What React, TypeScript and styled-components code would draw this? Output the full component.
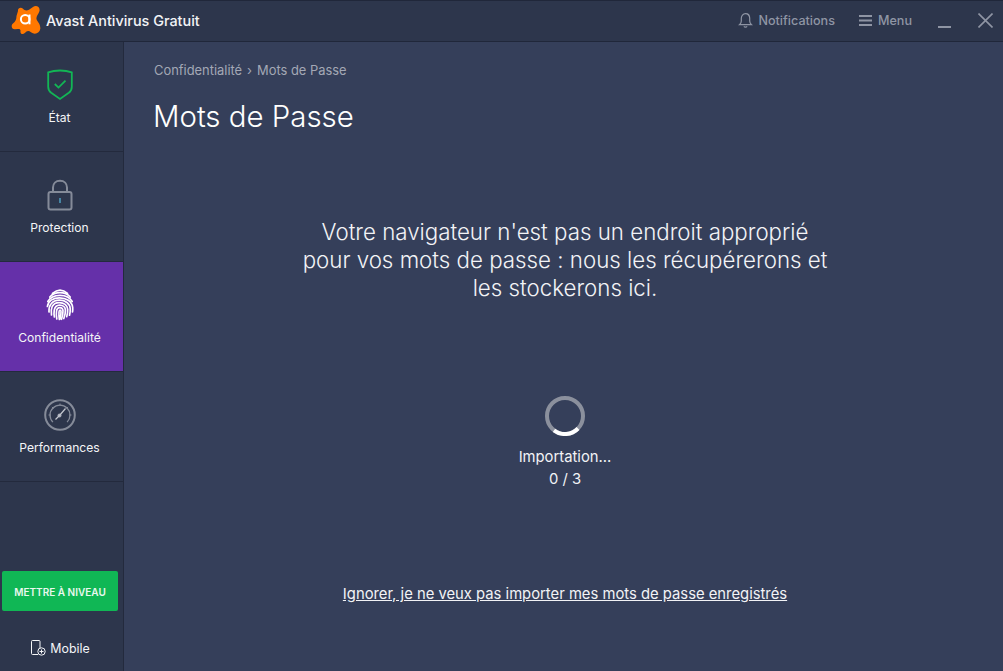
import React from "react";
import styled, { createGlobalStyle } from "styled-components";

const Global = createGlobalStyle`
  html, body { margin: 0; padding: 0; height: 100%; background: #353f5a; }
  #root { height: 100%; }
  * { box-sizing: border-box; }
`;

const Window = styled.div`
  width: 1003px;
  height: 671px;
  display: flex;
  flex-direction: column;
  overflow: hidden;
  font-family: Inter, "Liberation Sans", sans-serif;
  color: #fff;
  background: #353f5a;
`;

const TitleBar = styled.header`
  height: 42px;
  flex: none;
  display: flex;
  align-items: center;
  background: #2d364c;
  border-top: 1px solid #20273a;
  border-bottom: 1px solid #20273a;
  padding: 0 10px 2px 11px;
`;

const Brand = styled.div`
  display: flex;
  align-items: center;
  gap: 5px;
  font-size: 14.4px;
  font-weight: 500;
  color: #f2f3f6;
  flex: 1;
`;

const TopAction = styled.div<{ $gap: number; $offset?: number }>`
  display: flex;
  align-items: center;
  gap: ${(p) => p.$gap}px;
  margin-left: ${(p) => p.$offset ?? 0}px;
  font-size: 12.6px;
  font-weight: 500;
  color: #8f95a4;
`;

const TopActions = styled.div`
  display: flex;
  align-items: center;
`;

const WindowButtons = styled.div`
  display: flex;
  align-items: center;
  gap: 26px;
  margin-left: 26px;
`;

const Body = styled.div`
  flex: 1;
  display: flex;
  min-height: 0;
`;

const Sidebar = styled.nav`
  width: 124px;
  flex: none;
  display: flex;
  flex-direction: column;
  background: #2d364c;
  border-right: 1px solid #232a3d;
`;

const NavItem = styled.div<{ $active?: boolean }>`
  height: 110px;
  flex: none;
  display: flex;
  flex-direction: column;
  align-items: center;
  justify-content: flex-start;
  padding: 26px 4px 0 0;
  gap: 8px;
  font-size: 12.1px;
  color: #f4f5f7;
  background: ${(p) => (p.$active ? "#6530a9" : "transparent")};
  border-bottom: 1px solid #232a3d;
`;

const NavIcon = styled.div`
  height: 34px;
  display: flex;
  align-items: center;
  justify-content: center;
`;

const SideFooter = styled.div`
  margin-top: auto;
  display: flex;
  flex-direction: column;
  align-items: center;
  padding: 0 5px 15px 2px;
  gap: 29px;
`;

const Upgrade = styled.button`
  width: 116px;
  height: 40px;
  border: none;
  border-radius: 2px;
  background: #10b755;
  color: #e9f8ef;
  font-family: inherit;
  font-size: 10px;
  font-weight: 600;
  padding: 1px 0 0;
`;

const MobileLink = styled.div`
  display: flex;
  align-items: center;
  gap: 4px;
  font-size: 12.4px;
  color: #f4f5f7;
`;

const Main = styled.main`
  flex: 1;
  display: flex;
  flex-direction: column;
  padding: 21px 27px 0 30px;
`;

const Breadcrumb = styled.div`
  display: flex;
  gap: 5px;
  font-size: 12.9px;
  line-height: 16px;
  color: #a3a8b5;
`;

const Title = styled.h1`
  margin: 19px 0 0 -1px;
  font-size: 29.4px;
  line-height: 38px;
  font-weight: 300;
  color: #fff;
`;

const Message = styled.p`
  margin: 82px auto 0;
  width: 600px;
  text-align: center;
  font-size: 22.3px;
  line-height: 28px;
  font-weight: 300;
  color: #f2f3f6;
`;

const Progress = styled.div`
  margin-top: 94px;
  display: flex;
  flex-direction: column;
  align-items: center;
  font-size: 14.8px;
  line-height: 22px;
  color: #f2f3f6;
`;

const Spinner = styled.svg`
  display: block;
  margin-bottom: 10px;
`;

const SkipLink = styled.a`
  margin-top: 94px;
  align-self: center;
  font-size: 14.8px;
  line-height: 20px;
  color: #f2f3f6;
  text-decoration: underline;
`;

const Logo = () => (
  <svg width="30" height="30" viewBox="0 0 30 30">
    <path
      fill="#ff7800"
      d="M7 6C6.500 3 10 1.800 12 3.800C13.500 5.500 15.500 6 18 4.800L22 2C25.500 -.5 29.800 2.500 28.300 6.500C27.200 9.500 25 11.500 25.500 14C26 16.500 29.800 19 29.300 23.800C28.800 28.500 23.500 30 20 27.300C18.500 26 17 25.500 15.500 26.500L13.800 28C11.500 30 9 28.500 9.500 26C9.700 24.500 8.500 23.800 7 24L4 24.200C.8 24.400 -.5 20.500 2 18.500C4.500 16.500 5.500 14 5.500 11z"
    />
    <circle cx="14.200" cy="14.300" r="4.300" fill="none" stroke="#fff" strokeWidth="2" />
    <path d="M18.500 9.500V19.300" fill="none" stroke="#fff" strokeWidth="2" />
  </svg>
);

const BellIcon = () => (
  <svg width="15" height="16" viewBox="0 0 15 16" fill="none" stroke="#8f95a4" strokeWidth="1.200">
    <path d="M1.500 12.700c1.200-1 1.800-2 1.800-3.700V6.300C3.300 3.700 5 1.700 7.500 1.700s4.200 2 4.200 4.600V9c0 1.700.6 2.700 1.800 3.700z" />
    <path d="M5.900 14.300c.4.600 1 .9 1.600.9s1.200-.3 1.600-.9" />
  </svg>
);

const MenuIcon = () => (
  <svg width="13" height="11" viewBox="0 0 13 11" fill="none" stroke="#8f95a4" strokeWidth="1.800">
    <path d="M0 1h13M0 5.500h13M0 10h13" />
  </svg>
);

const MinimizeIcon = () => (
  <svg width="14" height="16" viewBox="0 0 14 16" fill="none" stroke="#8f95a4" strokeWidth="2">
    <path d="M0 15h13" />
  </svg>
);

const CloseIcon = () => (
  <svg width="15" height="15" viewBox="0 0 15 15" fill="none" stroke="#8f95a4" strokeWidth="1.600">
    <path d="M.5.500l14 14M14.500.500l-14 14" />
  </svg>
);

const ShieldIcon = () => (
  <svg width="26" height="32" viewBox="0 0 26 32" fill="none">
    <path
      d="M1.200 3.400C4.500 2.200 8.500 1.500 13 1.500s8.500.7 11.800 1.900v14.300c0 2.700-1 4.600-3 6.100L13 30l-8.800-6.200c-2-1.500-3-3.400-3-6.100z"
      stroke="#12b655"
      strokeWidth="1.800"
    />
    <path d="M7.800 15l3.700 3.600 7-7" stroke="#12b655" strokeWidth="1.800" />
  </svg>
);

const LockIcon = () => (
  <svg width="26" height="32" viewBox="0 0 26 32" fill="none" stroke="#858b99" strokeWidth="2">
    <rect x="1.500" y="13" width="23" height="17.500" rx="2" />
    <path d="M6 13V8.500C6 4.500 8.800 1.700 13 1.700s7 2.800 7 6.800V13" />
    <path d="M13 19v5" stroke="#4f9fc0" strokeWidth="1.500" />
  </svg>
);

const FingerprintIcon = () => (
  <svg width="28" height="32" viewBox="0 0 28 32" fill="none" stroke="#fff" strokeWidth="1.700" strokeLinecap="round">
    <path d="M6.500 4.500C9 2.400 11.500 1.200 14 1.200s5 1 7.500 3.300" />
    <path d="M3.800 8C6.500 5 10 3.700 14 3.700S21.500 5 24.200 8" />
    <path d="M1.800 12.500C4 8.500 8.500 6.300 14 6.300s10 2.200 12.200 6.200" />
    <path d="M1.400 17.500C2 12 7 8.800 13.500 8.800c6.500 0 12.500 3.500 13.200 9.700.1 1.500 0 3-.2 4.300" />
    <path d="M3 23C2.800 20 3.300 17 5 15c2-2.500 5-3.800 8.500-3.800 5.700 0 10.500 3.300 10.700 8.500.1 2.300-.1 4.500-.7 6.500" />
    <path d="M5.500 26c-.5-3-.5-6 .7-8.500 1.400-2.700 4-3.900 7-3.900 4.600 0 8.300 2.700 8.500 6.700.1 2.500-.2 5-1 7.400" />
    <path d="M8.400 28c-.4-2-.5-4.500-.2-6.500.4-3 2.500-5.400 5.400-5.400 3.200 0 5.700 2 5.800 4.800.1 3-.5 6-1.600 8.600" />
    <path d="M10.800 30c-.5-2.500-.6-5-.3-7.500.2-2 1.400-3.900 3.300-3.900 1.900 0 3.100 1.200 3.200 3 .1 3-.5 6-1.500 8.700" />
    <path d="M13.400 30.500c-.4-2.500-.6-5-.4-7.500.1-1 .4-1.900 1-1.900.7 0 1 .7 1 1.500.1 2.500-.3 5-1 7.500" />
  </svg>
);

const GaugeIcon = () => (
  <svg width="32" height="32" viewBox="0 0 32 32" fill="none" stroke="#858b99">
    <circle cx="16" cy="16" r="14.800" strokeWidth="2" />
    <path d="M8.900 23.100A10 10 0 1 1 23.100 23.100" strokeWidth="1.300" />
    <path d="M16 4.500v2.500M7.900 7.900l1.700 1.700M24.100 7.900l-1.700 1.700M4.500 16h2.500M25 16h2.500" strokeWidth="1" />
    <circle cx="15.500" cy="16.500" r="2" fill="#a3a8b5" stroke="none" />
    <path d="M11.500 20.500L15.500 16.500L21.500 9.500" stroke="#c4c7cf" strokeWidth="1.200" />
  </svg>
);

const MobileIcon = () => (
  <svg width="16" height="16" viewBox="0 0 16 16" fill="none" stroke="#f4f5f7" strokeWidth="1">
    <path d="M8 14.500H2.500a1 1 0 0 1-1-1V1.500a1 1 0 0 1 1-1h6.500a1 1 0 0 1 1 1V8" />
    <circle cx="11.500" cy="11.500" r="3.700" />
    <path d="M11.500 9.500v4M9.500 11.500h4" />
  </svg>
);

const SpinnerIcon = () => (
  <Spinner width="40" height="40" viewBox="0 0 40 40" fill="none">
    <circle cx="20" cy="20" r="18" stroke="#8b909d" strokeWidth="4" />
    <path d="M9 34.300A18 18 0 0 0 33 32.500" stroke="#fff" strokeWidth="4" />
  </Spinner>
);

const navItems = [
  { label: "État", icon: <ShieldIcon /> },
  { label: "Protection", icon: <LockIcon /> },
  { label: "Confidentialité", icon: <FingerprintIcon />, active: true },
  { label: "Performances", icon: <GaugeIcon /> },
];

export default function App() {
  return (
    <Window>
      <Global />
      <TitleBar>
        <Brand>
          <Logo />
          Avast Antivirus Gratuit
        </Brand>
        <TopActions>
          <TopAction $gap={5}>
            <BellIcon />
            Notifications
          </TopAction>
          <TopAction $gap={6} $offset={24}>
            <MenuIcon />
            Menu
          </TopAction>
          <WindowButtons>
            <MinimizeIcon />
            <CloseIcon />
          </WindowButtons>
        </TopActions>
      </TitleBar>
      <Body>
        <Sidebar>
          {navItems.map((n) => (
            <NavItem key={n.label} $active={n.active}>
              <NavIcon>{n.icon}</NavIcon>
              {n.label}
            </NavItem>
          ))}
          <SideFooter>
            <Upgrade>METTRE À NIVEAU</Upgrade>
            <MobileLink>
              <MobileIcon />
              Mobile
            </MobileLink>
          </SideFooter>
        </Sidebar>
        <Main>
          <Breadcrumb>
            <span>Confidentialité</span>
            <span>›</span>
            <span>Mots de Passe</span>
          </Breadcrumb>
          <Title>Mots de Passe</Title>
          <Message>
            Votre navigateur n'est pas un endroit approprié
            <br />
            pour vos mots de passe : nous les récupérerons et
            <br />
            les stockerons ici.
          </Message>
          <Progress>
            <SpinnerIcon />
            Importation...
            <br />
            <span>0 / 3</span>
          </Progress>
          <SkipLink>Ignorer, je ne veux pas importer mes mots de passe enregistrés</SkipLink>
        </Main>
      </Body>
    </Window>
  );
}
